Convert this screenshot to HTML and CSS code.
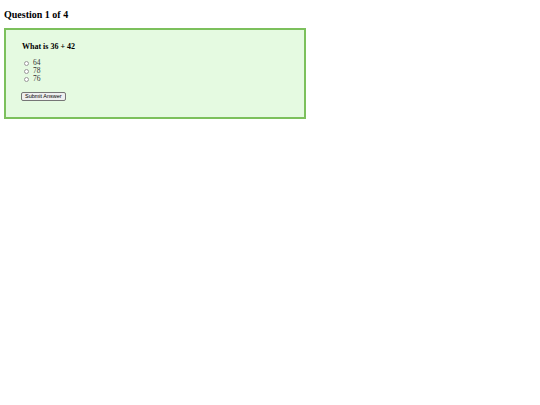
FILE: index.html
```html
<!DOCTYPE html>
<html>
<head>
<meta charset="utf-8">
<link rel="stylesheet" href="styles.css">
</head>
<body>
<h2 class="title">Question 1 of 4</h2>
<div class="quiz">
  <h3 class="question">What is 36 + 42</h3>
  <div class="options">
    <label class="option"><input type="radio" name="a" class="radio"><span>64</span></label>
    <label class="option"><input type="radio" name="a" class="radio"><span>78</span></label>
    <label class="option"><input type="radio" name="a" class="radio"><span>76</span></label>
  </div>
  <button class="submit">Submit Answer</button>
</div>
</body>
</html>
```
FILE: styles.css
```css
html, body {
  background: #ffffff;
}
body {
  margin: 0;
  padding: 8px 4px 0;
  font-family: "Liberation Serif", "Times New Roman", serif;
  color: #000;
}
.title {
  margin: 0 0 6px;
  font-size: 10px;
  line-height: 14px;
  font-weight: bold;
}
.quiz {
  width: 266px;
  border: 2px solid #7cc05c;
  background: #e5fae1;
  padding: 12px 16px 16px;
}
.question {
  margin: 0 0 8px;
  font-size: 8px;
  line-height: 9px;
  font-weight: bold;
}
.options {
  display: flex;
  flex-direction: column;
  margin-bottom: 9px;
}
.option {
  display: flex;
  align-items: center;
  height: 8px;
  font-family: "Liberation Serif", "Times New Roman", serif;
  font-size: 7.5px;
  line-height: 8px;
  color: #333;
}
.radio {
  appearance: none;
  -webkit-appearance: none;
  box-sizing: border-box;
  width: 5px;
  height: 5px;
  margin: 0 4px 0 2px;
  border: 0.6px solid #9a9a9a;
  border-radius: 50%;
  background: #ffffff;
}
.submit {
  display: block;
  box-sizing: border-box;
  font-family: "Liberation Sans", Arial, sans-serif;
  font-size: 5.5px;
  color: #000;
  height: 9px;
  line-height: 7px;
  padding: 0 3px;
  margin: 0 0 0 -1px;
  background: #efefef;
  border: 0.6px solid #767676;
  border-radius: 2px;
}
```
